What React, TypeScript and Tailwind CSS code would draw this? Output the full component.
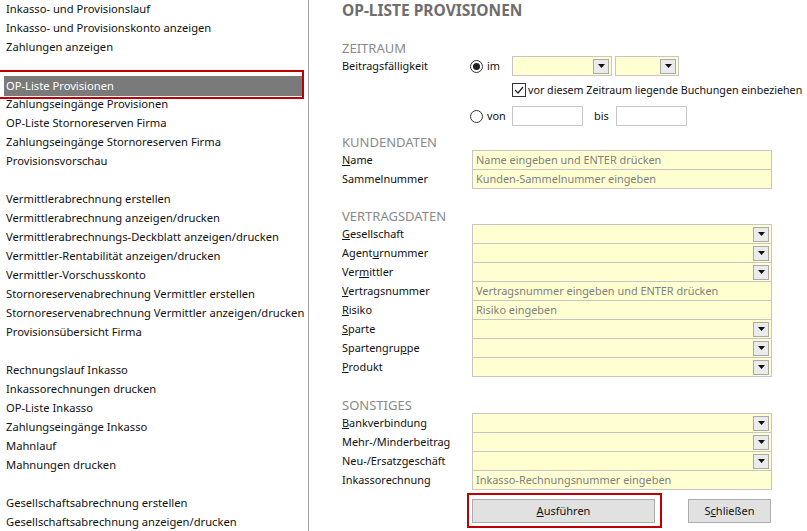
import React from "react";

const MENU: (string | null)[] = [
  "Inkasso- und Provisionslauf",
  "Inkasso- und Provisionskonto anzeigen",
  "Zahlungen anzeigen",
  null,
  "OP-Liste Provisionen",
  "Zahlungseingänge Provisionen",
  "OP-Liste Stornoreserven Firma",
  "Zahlungseingänge Stornoreserven Firma",
  "Provisionsvorschau",
  null,
  "Vermittlerabrechnung erstellen",
  "Vermittlerabrechnung anzeigen/drucken",
  "Vermittlerabrechnungs-Deckblatt anzeigen/drucken",
  "Vermittler-Rentabilität anzeigen/drucken",
  "Vermittler-Vorschusskonto",
  "Stornoreservenabrechnung Vermittler erstellen",
  "Stornoreservenabrechnung Vermittler anzeigen/drucken",
  "Provisionsübersicht Firma",
  null,
  "Rechnungslauf Inkasso",
  "Inkassorechnungen drucken",
  "OP-Liste Inkasso",
  "Zahlungseingänge Inkasso",
  "Mahnlauf",
  "Mahnungen drucken",
  null,
  "Gesellschaftsabrechnung erstellen",
  "Gesellschaftsabrechnung anzeigen/drucken",
];

type Field = {
  label: string;
  u?: number; // index of the underlined mnemonic letter
  kind: "select" | "text";
  placeholder?: string;
};

const KUNDEN: Field[] = [
  { label: "Name", u: 0, kind: "text", placeholder: "Name eingeben und ENTER drücken" },
  { label: "Sammelnummer", kind: "text", placeholder: "Kunden-Sammelnummer eingeben" },
];

const VERTRAG: Field[] = [
  { label: "Gesellschaft", u: 0, kind: "select" },
  { label: "Agenturnummer", u: 5, kind: "select" },
  { label: "Vermittler", u: 3, kind: "select" },
  { label: "Vertragsnummer", u: 0, kind: "text", placeholder: "Vertragsnummer eingeben und ENTER drücken" },
  { label: "Risiko", u: 0, kind: "text", placeholder: "Risiko eingeben" },
  { label: "Sparte", u: 0, kind: "select" },
  { label: "Spartengruppe", u: 10, kind: "select" },
  { label: "Produkt", u: 0, kind: "select" },
];

const SONST: Field[] = [
  { label: "Bankverbindung", u: 0, kind: "select" },
  { label: "Mehr-/Minderbeitrag", kind: "select" },
  { label: "Neu-/Ersatzgeschäft", kind: "select" },
  { label: "Inkassorechnung", kind: "text", placeholder: "Inkasso-Rechnungsnummer eingeben" },
];

function Mnemonic({ text, u }: { text: string; u?: number }) {
  if (u === undefined) return <>{text}</>;
  return (
    <>
      {text.slice(0, u)}
      <u>{text[u]}</u>
      {text.slice(u + 1)}
    </>
  );
}

function DropButton() {
  return (
    <div className="ml-auto mr-[2px] w-[16px] h-[15px] border border-[#a9a9a9] bg-[#ebebeb] flex items-center justify-center shrink-0">
      <svg width="7" height="4" viewBox="0 0 7 4">
        <path d="M0 0h7L3.5 4z" fill="#111" />
      </svg>
    </div>
  );
}

function FormRow({ field, first }: { field: Field; first: boolean }) {
  return (
    <div className="flex items-center">
      <div className="w-[130px] text-[10.9px] text-[#111] whitespace-nowrap">
        <Mnemonic text={field.label} u={field.u} />
      </div>
      <div
        className={`w-[300px] ${first ? "h-[20px] border-t" : "h-[19px]"} border-x border-b border-[#c6c6c6] bg-[#ffffd2] flex items-center`}
      >
        {field.kind === "text" ? (
          <span className="pl-[3px] text-[10.9px] text-[#808080] whitespace-nowrap">{field.placeholder}</span>
        ) : (
          <DropButton />
        )}
      </div>
    </div>
  );
}

function Section({ title, fields, className }: { title: string; fields: Field[]; className: string }) {
  return (
    <div className={className}>
      <div className="h-[16px] leading-[16px] text-[13px] text-[#8a8a8a]">{title}</div>
      <div className="flex flex-col">
        {fields.map((f, i) => (
          <FormRow key={f.label} field={f} first={i === 0} />
        ))}
      </div>
    </div>
  );
}

function Radio({ checked }: { checked?: boolean }) {
  return (
    <div className="w-[17px] shrink-0 flex items-center">
      <div className="w-[13px] h-[13px] rounded-full border border-[#333] flex items-center justify-center">
        {checked && <div className="w-[7px] h-[7px] rounded-full bg-[#222]" />}
      </div>
    </div>
  );
}

export default function App() {
  return (
    <div className="w-[807px] h-[531px] overflow-hidden flex bg-white font-['Segoe_UI','Noto_Sans',sans-serif] text-[11.2px] text-[#111]">
      {/* Menu list */}
      <div className="w-[309px] shrink-0 border-r border-[#a0a0a0] overflow-hidden">
        <div className="-mt-[1px] flex flex-col">
          {MENU.map((item, i) =>
            item === null ? (
              <div key={i} className="h-[19px]" />
            ) : item === "OP-Liste Provisionen" ? (
              <div key={i} className="relative h-[19px] mt-[1px] -mb-[1px]">
                <div className="ml-[4px] w-[299px] h-[20px] bg-[#7a7a7a] text-white leading-[20px] pl-[2px] whitespace-nowrap">
                  {item}
                </div>
                <span className="absolute left-[-3px] top-[-6px] w-[307px] h-[29px] border-2 border-[#c00000]" />
              </div>
            ) : (
              <div key={i} className="h-[19px] leading-[19px] pl-[6px] whitespace-nowrap">
                {item}
              </div>
            )
          )}
        </div>
      </div>

      {/* Form */}
      <div className="flex-1 pl-[33px] flex flex-col text-[10.9px]">
        <div className="-mt-[1px] h-[22px] leading-[22px] text-[15.5px] font-bold text-[#6e6e6e]">OP-LISTE PROVISIONEN</div>

        <div className="mt-[19px] h-[16px] leading-[16px] text-[13px] text-[#8a8a8a]">ZEITRAUM</div>
        <div className="flex items-center h-[20px]">
          <div className="w-[128px]">Beitragsfälligkeit</div>
          <Radio checked />
          <div className="w-[25px]">im</div>
          <div className="w-[100px] h-[20px] border border-[#c6c6c6] bg-[#ffffd2] flex items-center">
            <DropButton />
          </div>
          <div className="ml-[3px] w-[64px] h-[20px] border border-[#c6c6c6] bg-[#ffffd2] flex items-center">
            <DropButton />
          </div>
        </div>
        <div className="mt-[4px] h-[20px] flex items-center pl-[170px]">
          <div className="w-[14px] h-[14px] border border-[#333] flex items-center justify-center shrink-0">
            <svg width="10" height="8" viewBox="0 0 10 8">
              <path d="M1 4l3 3 5-6" fill="none" stroke="#222" strokeWidth="1.2" />
            </svg>
          </div>
          <span className="ml-[2px] whitespace-nowrap text-[10.7px]">vor diesem Zeitraum liegende Buchungen einbeziehen</span>
        </div>
        <div className="mt-[6px] flex items-center h-[20px]">
          <div className="w-[128px]" />
          <Radio />
          <div className="w-[25px]">von</div>
          <div className="w-[71px] h-[20px] border border-[#c6c6c6] bg-white" />
          <div className="ml-[11px] w-[22px]">bis</div>
          <div className="w-[71px] h-[20px] border border-[#c6c6c6] bg-white" />
        </div>

        <Section title="KUNDENDATEN" fields={KUNDEN} className="mt-[8px]" />
        <Section title="VERTRAGSDATEN" fields={VERTRAG} className="mt-[19px]" />
        <Section title="SONSTIGES" fields={SONST} className="mt-[20px]" />

        <div className="mt-[9px] flex items-center pl-[130px]">
          <div className="relative">
            <button className="w-[183px] h-[24px] border border-[#adadad] bg-[#e1e1e1] text-[11px] text-[#111]">
              <u>A</u>usführen
            </button>
            <span className="absolute left-[-5px] top-[-6px] w-[195px] h-[35px] border-2 border-[#c00000]" />
          </div>
          <button className="ml-[33px] w-[83px] h-[24px] border border-[#adadad] bg-[#e1e1e1] text-[11px] text-[#111]">
            S<u>c</u>hließen
          </button>
        </div>
      </div>
    </div>
  );
}
